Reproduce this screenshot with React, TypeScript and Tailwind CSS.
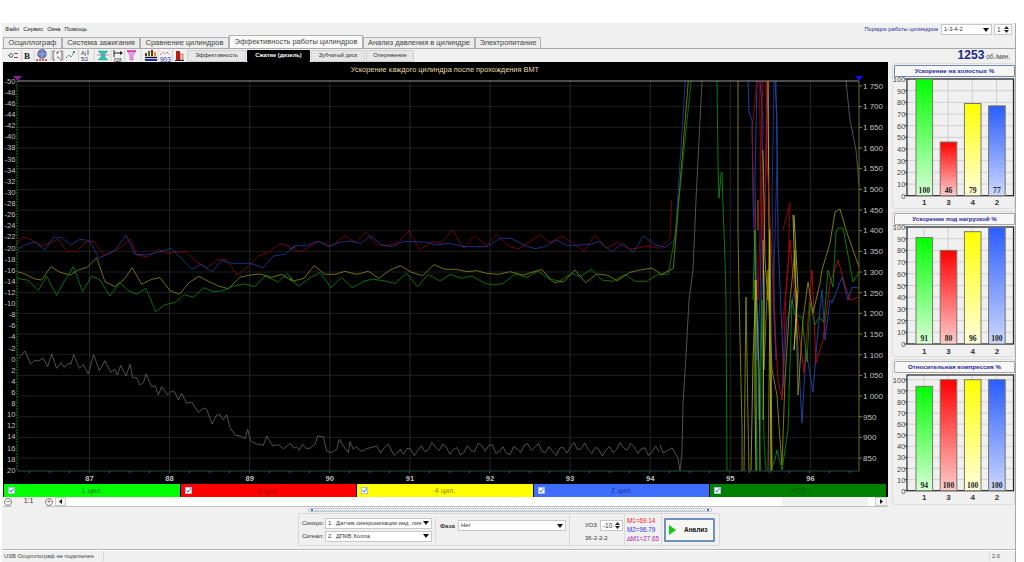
import React from "react";

// converts points read from a zoomed crop (3x) back to page coordinates
function z(ox: number, oy: number, s: string) {
  return s
    .split(" ")
    .map((p) => {
      const [x, y] = p.split(",").map(Number);
      return `${ox + x / 3},${oy + y / 3}`;
    })
    .join(" ");
}

const calm = [
  {
    c: "#8a0514",
    a: "50,75 68,50 95,60 125,78 150,68 175,57 200,94 230,94 258,66 282,64 310,104 340,95 365,82 390,55 410,105 445,111 475,88 505,101 530,96 560,96 590,125 620,145 650,120 680,118 710,165 745,140 775,107 805,98 840,70 870,80",
    b: "0,85 32,95 85,65 125,78 165,47 197,68 228,37 262,75 295,77 325,67 357,33 390,90 425,65 455,68 488,30 522,85 553,47 590,78 620,42 655,78 685,87 750,45 780,68 815,48 850,70 882,93 915,45 950,85 982,67 1020,88 1075,78 1110,85 1140,55 1145,-60",
  },
  {
    c: "#1f3f9c",
    a: "50,88 80,72 105,66 135,90 160,52 185,52 212,75 240,58 270,62 295,113 325,103 350,85 378,45 405,103 440,105 470,98 515,85 575,148 605,132 635,156 665,122 695,130 750,130 790,143 820,108 855,103 885,77",
    b: "0,88 20,77 50,77 85,63 115,80 150,67 180,63 212,71 242,47 275,75 307,80 340,64 412,67 440,75 475,70 525,80 590,80 632,55 665,55 700,75 735,86 765,80 800,60 832,77 900,73 928,65 965,95 1000,70 1030,97 1060,47 1095,75 1125,82 1155,60 1190,-480",
  },
  {
    c: "#8c8c12",
    a: "50,155 70,160 105,177 125,180 153,140 180,157 210,165 235,150 262,142 290,113 315,185 345,200 372,178 397,143 425,193 455,178 480,173 510,212 538,223 568,187 597,169 625,184 655,198 685,206 720,172 750,165 780,162 815,172 845,163 875,182",
    b: "0,178 10,183 42,175 72,137 105,163 135,163 165,154 200,163 235,154 267,175 300,150 332,137 365,157 398,167 432,134 465,148 500,148 530,155 560,152 590,160 625,163 660,155 700,165 755,148 790,187 822,185 855,150 887,188 920,162 950,165 982,182 1020,157 1050,150 1085,144 1115,163 1150,145 1200,-480",
  },
  {
    c: "#0b8c0b",
    a: "50,175 85,181 115,211 140,168 170,226 195,180 220,140 248,215 275,168 300,180 330,228 360,188 385,212 410,223 438,205 467,275 495,254 525,247 553,224 580,232 610,203 640,215 670,212 700,198 735,192 765,200 795,168 835,186 862,160 885,190",
    b: "0,172 25,199 60,173 90,158 123,203 155,172 187,203 225,182 250,178 280,182 315,190 350,160 382,200 415,163 450,183 482,163 515,175 545,168 585,190 610,195 640,190 675,162 710,172 745,153 780,178 810,183 845,160 870,170 905,148 935,180 970,184 1005,163 1035,184 1070,184 1100,165 1135,162 1155,50 1210,-480",
  },
];

const greyTrace =
  "55,55 75,33 92,72 105,60 115,63 130,55 143,80 155,42 170,85 183,68 192,82 207,70 213,72 221,44 238,85 250,74 265,102 281,44 298,92 315,62 332,97 345,88 352,105 362,76 378,108 390,73 398,113 410,113 420,135 430,128 438,102 455,140 465,137 475,165 485,140 503,165 515,153 525,157 535,180 545,160 560,190 575,186 595,217 612,204 620,208 636,252 650,225 660,224 670,240 680,224 690,262 705,285 720,288 735,296 743,268 752,303 770,312 790,316 800,288 818,318 835,314 850,326 872,310 882,325 890,320 898,331 907,312 918,325 930,325 945,313 953,288 970,290 980,333 995,338 1010,328 1018,298 1035,325 1045,338 1050,305 1060,328 1068,320 1085,335 1100,326 1130,318 1142,340 1150,326 1165,313 1182,346 1200,332";

// the noisy flat stretch of the grey trace
const greyTail = Array.from({ length: 74 }, (_, i) => {
  const x = 400 + i * 3.55;
  const y = 449 + 4.5 * Math.sin(i * 1.9) + 2.5 * Math.sin(i * 0.47);
  return `${x.toFixed(1)},${y.toFixed(1)}`;
}).join(" ");

const chaos: { c: string; p: string }[] = [
  { c: "#666666", p: "660,445 663,453 672,448 678,458 680,471 682,452 683,403 686,355 689,300 693,270 696,200 699,140 702,81" },
  { c: "#666666", p: "846,81 850,120 856,150 859,185" },
  { c: "#0a9a0a", p: "717,81 718,165 719,198 721,174 722,172 723,205 725,260 726,300 727,471" },
  { c: "#9a9a10", p: "738,81 738,230 739,295 742,427 742,471" },
  { c: "#9a9a10", p: "744,471 746,297 748,420 749,471" },
  { c: "#2450c0", p: "748,81 749,112 752,120 753,200 756,290 757,360 760,300 762,190 763,120 760,81" },
  { c: "#2450c0", p: "757,81 755,180 756,260 759,420 761,320 765,200 768,81" },
  { c: "#1f3f9c", p: "776,81 777,160 775,240 773,300 776,360 772,200 774,81" },
  { c: "#b00012", p: "757,81 752,130 754,200 758,300 760,230 762,81" },
  { c: "#b00012", p: "763,81 760,160 764,250 767,81" },
  { c: "#900012", p: "759,81 761,180 763,280 766,180 769,81" },
  { c: "#b8b810", p: "763,150 765,260 768,300 770,230 771,340 772,471" },
  { c: "#20b020", p: "753,300 755,230 757,470" },
  { c: "#a8e020", p: "755,280 755,400 756,471" },
  { c: "#b8b810", p: "751,471 753,360 756,280 759,370 760,471" },
  { c: "#8c8c12", p: "764,270 764,370 768,270 770,300 768,471" },
  { c: "#0a9a0a", p: "760,471 760,440 762,300 764,440 766,471" },
  { c: "#d8d820", p: "768,81 769,220 771,470" },
  { c: "#2450c0", p: "775,81 777,120 778,240 781,310 784,380 782,395 787,320 795,290 802,423 806,350 813,392 818,330 822,290 825,340 830,300 832,303 842,277 848,300 852,287 859,288" },
  { c: "#cc0a12", p: "766,81 767,160 772,260 775,330 778,380 782,400 786,290 790,240 795,300 804,373 808,320 812,270 816,363 823,340 830,283 838,260 845,285 850,300 859,297" },
  { c: "#b00012", p: "783,230 790,203 788,270 782,330" },
  { c: "#9a9a10", p: "768,290 772,370 777,395 780,440 782,465 785,380 790,300 795,250 798,395 803,320 808,282 813,313 820,283 822,270 830,243 835,212 840,209 847,233 859,267" },
  { c: "#0a9a0a", p: "770,471 775,460 777,450 782,470 788,430 792,300 795,315 802,317 807,362 810,303 815,325 819,317 824,322 828,270 833,287 836,232 838,228 843,228 853,282 859,272" },
  { c: "#c8c820", p: "793,215 795,280 797,300 794,350 798,290 794,215" },
  { c: "#d8c040", p: "763,240 764,300 763,420" },
  { c: "#e08a10", p: "758,200 758,230" },
];

const leftLabels = Array.from({ length: 36 }, (_, i) => -50 + i * 2);
const rightLabels = Array.from({ length: 19 }, (_, i) => 1750 - i * 50);
const xLabels = [87, 88, 89, 90, 91, 92, 93, 94, 95, 96];

function ScopeChart() {
  return (
    <svg viewBox="3 62 885 422" className="block h-[422px] w-[885px] bg-black">
      <defs>
        <clipPath id="plot">
          <rect x="17" y="81" width="842" height="390" />
        </clipPath>
      </defs>
      <text x="445" y="72" textAnchor="middle" fontSize="7.4" fill="#e8d8a8" fontFamily="Liberation Sans">
        Ускорение каждого цилиндра после прохождения ВМТ
      </text>
      {rightLabels.map((_, i) => (
        <line key={i} x1="17" x2="859" y1={86 + i * 20.67} y2={86 + i * 20.67} stroke="#1e1e1e" />
      ))}
      {xLabels.map((v, i) => (
        <line key={v} x1={89.5 + i * 80.1} x2={89.5 + i * 80.1} y1="81" y2="471" stroke="#262626" />
      ))}
      <g clipPath="url(#plot)" fill="none" strokeWidth="0.8">
        <polyline points={z(0, 340, greyTrace) + " " + greyTail} stroke="#666666" />
        {chaos.map((l, i) => (
          <polyline key={i} points={l.p} stroke={l.c} />
        ))}
        {calm.map((l) => (
          <polyline key={l.c} points={z(0, 220, l.a) + " " + z(290, 220, l.b)} stroke={l.c} />
        ))}
      </g>
      <line x1="17" x2="859" y1="81" y2="81" stroke="#9a9a9a" />
      <line x1="17" x2="859" y1="471" y2="471" stroke="#244a4a" />
      {Array.from({ length: 42 }, (_, i) => (
        <line key={i} x1={29.5 + i * 20} x2={29.5 + i * 20} y1="471" y2="473" stroke="#3d5a5a" />
      ))}
      <line x1="17" x2="17" y1="81" y2="471" stroke="#1d8a1d" strokeDasharray="2 1" />
      <line x1="859" x2="859" y1="81" y2="471" stroke="#6e6a1c" />
      {leftLabels.map((v, i) => (
        <text key={v} x="15.5" y={83.8 + i * 11.115} textAnchor="end" fontSize="7.6" fill="#c0c0c0" fontFamily="Liberation Sans">
          {v}
        </text>
      ))}
      {rightLabels.map((v, i) => (
        <g key={v}>
          <line x1="859" x2="862" y1={86 + i * 20.67} y2={86 + i * 20.67} stroke="#8a8620" />
          <text x="863" y={88.8 + i * 20.67} fontSize="8" fill="#c0c0c0" fontFamily="Liberation Sans">
            {v >= 1000 ? `1 ${String(v).slice(1)}` : v}
          </text>
        </g>
      ))}
      {xLabels.map((v, i) => (
        <text key={v} x={89.5 + i * 80.1} y="481" textAnchor="middle" fontSize="7.6" fontWeight="700" fill="#c0c0c0" fontFamily="Liberation Sans">
          {v}
        </text>
      ))}
      <polygon points="13,76 22,76 17.5,81" fill="#8a1a9a" />
      <polygon points="855,76 863,76 859,81" fill="#1010f0" />
    </svg>
  );
}

const bars = [
  { id: "g1", label: "1", from: "#00ff00", to: "#d8ffd8" },
  { id: "r1", label: "3", from: "#ff0000", to: "#ffcccc" },
  { id: "y1", label: "4", from: "#ffff00", to: "#ffffdc" },
  { id: "b1", label: "2", from: "#2a5cff", to: "#ccd8ff" },
];

function BarPanel({
  title,
  values,
  prefix,
  plotTop,
  zeroY,
  topY,
  outlined,
}: {
  title: string;
  values: number[];
  prefix: string;
  plotTop: number;
  zeroY: number;
  topY: number;
  outlined?: boolean;
}) {
  const scale = (zeroY - topY) / 100;
  return (
    <div className="flex h-[146px] w-[123px] flex-col rounded-[3px] border border-[#dcdcdc] px-px pt-px">
      <div
        className={`flex h-[12px] w-[121px] items-center justify-center rounded-[1px] border bg-[#f6f6f6] text-[6.2px] font-bold whitespace-nowrap text-[#27279c] ${
          outlined ? "border-[#6f8aa8]" : "border-[#a8a8a8]"
        }`}
      >
        {title}
      </div>
      <svg viewBox="0 0 121 131" className="block h-[131px] w-[121px] overflow-visible">
        <defs>
          {bars.map((b) => (
            <linearGradient key={b.id} id={prefix + b.id} x1="0" y1="0" x2="0" y2="1">
              <stop offset="0" stopColor={b.from} />
              <stop offset="1" stopColor={b.to} />
            </linearGradient>
          ))}
        </defs>
        {Array.from({ length: 11 }, (_, i) => (
          <g key={i}>
            <line x1="13" x2="119.5" y1={zeroY - i * 10 * scale} y2={zeroY - i * 10 * scale} stroke="#c8c8c8" strokeWidth="0.8" />
            <line x1="10.5" x2="13" y1={zeroY - i * 10 * scale} y2={zeroY - i * 10 * scale} stroke="#222" strokeWidth="0.8" />
            <text x="11.5" y={zeroY - i * 10 * scale + 3} textAnchor="end" fontSize="7.6" fill="#444" fontFamily="Liberation Sans">
              {i * 10}
            </text>
          </g>
        ))}
        {bars.map((b, i) => (
          <line key={b.id} x1={30 + i * 24.2} x2={30 + i * 24.2} y1={plotTop} y2={zeroY} stroke="#c8c8c8" strokeWidth="0.8" />
        ))}
        <rect x="13" y={plotTop} width="106.5" height={zeroY - plotTop} fill="none" stroke="#222" strokeWidth="1.2" />
        {bars.map((b, i) => {
          const h = values[i] * scale;
          return (
            <g key={b.id}>
              <rect
                x={22 + i * 24.2}
                y={zeroY - h}
                width="16.6"
                height={h}
                fill={`url(#${prefix + b.id})`}
                stroke="#777766"
                strokeWidth="1"
              />
              <text x={30.3 + i * 24.2} y={zeroY - 3} textAnchor="middle" fontSize="7.6" fontWeight="700" fill="#222" fontFamily="Liberation Serif">
                {values[i]}
              </text>
              <text x={30.3 + i * 24.2} y={zeroY + 9.5} textAnchor="middle" fontSize="8" fontWeight="700" fill="#333" fontFamily="Liberation Sans">
                {b.label}
              </text>
            </g>
          );
        })}
      </svg>
    </div>
  );
}

function Arrow({ dir = "down" }: { dir?: "down" | "up" }) {
  return (
    <svg width="6" height="4" viewBox="0 0 6 4" className="block shrink-0">
      <polygon points={dir === "down" ? "0,0 6,0 3,4" : "0,4 6,4 3,0"} fill="#111" />
    </svg>
  );
}

function Combo({ text, w }: { text: string; w: string }) {
  return (
    <div className={`flex h-[11px] items-center justify-between gap-[2px] border border-[#c8c8c8] bg-white px-[2px] text-[5.8px] whitespace-pre text-[#333] ${w}`}>
      <span>{text}</span>
      <Arrow />
    </div>
  );
}

function Spin({ text, w }: { text: string; w: string }) {
  return (
    <div className={`flex h-[11px] items-center justify-between border border-[#c8c8c8] bg-white px-[2px] text-[6.5px] text-[#333] ${w}`}>
      <span>{text}</span>
      <span className="flex flex-col gap-px">
        <svg width="5" height="3" viewBox="0 0 5 3" className="block"><polygon points="0,3 5,3 2.5,0" fill="#222" /></svg>
        <svg width="5" height="3" viewBox="0 0 5 3" className="block"><polygon points="0,0 5,0 2.5,3" fill="#222" /></svg>
      </span>
    </div>
  );
}

const tabs = [
  { t: "Осциллограф", w: "w-[59px]" },
  { t: "Система зажигания", w: "w-[78px]" },
  { t: "Сравнение цилиндров", w: "w-[89px]" },
  { t: "Эффективность работы цилиндров", w: "w-[134px]", active: true },
  { t: "Анализ давления в цилиндре", w: "w-[112px]" },
  { t: "Электропитание", w: "w-[66px]" },
];

const subTabs = [
  { t: "Эффективность", w: "w-[59px]" },
  { t: "Сжатие (дизель)", w: "w-[63px]", active: true },
  { t: "Зубчатый диск", w: "w-[54px]" },
  { t: "Опережение", w: "w-[48px]" },
];

function ToolIcons() {
  return (
    <div className="flex h-[13px] items-center">
      <svg width="182" height="13" viewBox="0 0 182 13" className="block">
        <circle cx="7" cy="6.5" r="1.8" fill="none" stroke="#336" strokeWidth="0.8" />
        <path d="M10 4.5h4M10 8.5h4" stroke="#c33" strokeWidth="1" />
        <path d="M4 6.5h1" stroke="#393" />
        <text x="20" y="10" fontSize="9" fontWeight="700" fill="#222" fontFamily="Liberation Serif">B</text>
        <circle cx="38" cy="5" r="4.4" fill="#6d78c8" stroke="#334" strokeWidth="0.5" />
        <path d="M33.5 5h9M38 .6v8.8" stroke="#cdd" strokeWidth="0.5" />
        <path d="M32 11h12" stroke="#c33" strokeWidth="1.6" strokeDasharray="2 1" />
        <path d="M51 2h-2v9h2M56 2h2v9h-2" fill="none" stroke="#444" strokeWidth="0.8" />
        <path d="M53 3v2M55 8v2" stroke="#c33" strokeWidth="1" />
        <path d="M53 8h1M53 3h2" stroke="#333" strokeWidth="0.8" />
        <path d="M62 9l3-3 2 2 3-5" fill="none" stroke="#1a8a2a" strokeWidth="1" strokeDasharray="2 1" />
        <circle cx="70" cy="3" r="1" fill="#272" />
        <text x="77" y="6" fontSize="5.5" fill="#333" fontFamily="Liberation Sans">Aj</text>
        <text x="77" y="12" fontSize="5" fill="#225" fontFamily="Liberation Sans">5/2</text>
        <path d="M84 1v5" stroke="#333" strokeWidth="0.8" />
        <path d="M94 2h10l-3 3v3l3 3H94l3-3V5z" fill="#27c4b8" stroke="#2a6" strokeWidth="0.5" />
        <path d="M93 6h12" stroke="#e060a0" strokeWidth="0.8" />
        <path d="M110 1v7M110 4h8" stroke="#223" strokeWidth="1" />
        <path d="M116 2l3 2-3 2" fill="#223" />
        <text x="110" y="12.5" fontSize="4.6" fill="#223" fontFamily="Liberation Sans">028</text>
        <path d="M123 2h9l-3 4v5h-3V6z" fill="#e8a0e8" stroke="#c040c0" strokeWidth="0.6" />
        <path d="M123 2h9" stroke="#d02080" strokeWidth="1.2" />
        <path d="M142 7V4M145 7V2M148 7V1M151 7V3" strokeWidth="2" stroke="#8a2222" />
        <path d="M145 7V3" strokeWidth="2" stroke="#2a8a2a" />
        <path d="M151 7V3" strokeWidth="2" stroke="#c8a010" />
        <path d="M141 8.5h12" stroke="#111" strokeWidth="1.4" />
        <path d="M141 11h12" stroke="#2030b0" strokeWidth="2" />
        <path d="M156 6l3-3 2 2 2-2 3 3" fill="none" stroke="#c04060" strokeWidth="0.9" strokeDasharray="1.2 0.8" />
        <text x="156" y="12.5" fontSize="6.5" fill="#2030a0" fontFamily="Liberation Sans">903</text>
        <rect x="172" y="2" width="4" height="9" fill="#c01818" />
        <rect x="176" y="5" width="3" height="6" fill="#e8d0a0" stroke="#802020" strokeWidth="0.5" />
        <path d="M171 11.5h9" stroke="#222" />
        <g stroke="#d0d0d0" strokeWidth="1">
          <path d="M17.5 1v11M30 1v11M47 1v11M59.5 1v11M74.5 1v11M90 1v11M107 1v11M120.5 1v11M137 1v11M154 1v11M168.5 1v11" />
        </g>
      </svg>
    </div>
  );
}

const legend = [
  { t: "1 цил.", bg: "bg-[#00ff00]", fg: "text-[#0a7a0a]" },
  { t: "3 цил.", bg: "bg-[#ff0000]", fg: "text-[#a00808]" },
  { t: "4 цил.", bg: "bg-[#ffff00]", fg: "text-[#8a8a00]" },
  { t: "2 цил.", bg: "bg-[#3d6cff]", fg: "text-[#1c3a9a]" },
  { t: "УОЗ", bg: "bg-[#008000]", fg: "text-[#0b5a0b]" },
];

export default function App() {
  return (
    <div className="flex h-[562px] w-[1024px] flex-col overflow-hidden bg-white pl-[2px] pr-[8px] pt-[23px] font-['Liberation_Sans',sans-serif]">
      <div className="flex flex-1 flex-col border-r border-[#a8a8a8] bg-[#f0f0f0]">
        <div className="flex h-[13px] items-center justify-between pl-[3px] pr-[3px]">
          <div className="flex gap-[4px] text-[5.8px] text-[#222]">
            <span>Файл</span>
            <span>Сервис</span>
            <span>Окна</span>
            <span>Помощь</span>
          </div>
          <div className="flex items-center gap-[2px]">
            <span className="mr-px text-[5.7px] text-[#27279c]">Порядок работы цилиндров</span>
            <Combo text="1-3-4-2" w="w-[51px]" />
            <Spin text="1" w="w-[18px]" />
          </div>
        </div>

        <div className="flex h-[13px] items-end border-b border-[#a8a8a8] pl-px">
          {tabs.map((tab) => (
            <div
              key={tab.t}
              className={`flex items-center justify-center border border-b-0 border-[#b0b0b0] text-[7.45px] whitespace-nowrap text-[#444] ${tab.w} ${
                tab.active ? "h-[13px] bg-[#fafafa]" : "h-[11px] bg-[#ececec]"
              }`}
            >
              {tab.t}
            </div>
          ))}
        </div>

        <div className="flex h-[13px] items-center pl-[2px] pr-[5px]">
          <ToolIcons />
          <div className="ml-[1px] flex h-[12px] gap-px">
            {subTabs.map((tab) => (
              <div
                key={tab.t}
                className={`flex items-center justify-center rounded-[1px] text-[5.7px] whitespace-nowrap ${tab.w} ${
                  tab.active ? "bg-black font-bold text-white" : "border border-[#d0d0d0] bg-[#e6e6e6] text-[#333]"
                }`}
              >
                {tab.t}
              </div>
            ))}
          </div>
          <div className="ml-auto flex items-baseline gap-[2px]">
            <span className="text-[12px] leading-[13px] font-bold text-[#1a2a8a]">1253</span>
            <span className="text-[6.3px] text-[#444]">об./мин.</span>
          </div>
        </div>

        <div className="flex h-[445px]">
          <div className="flex w-[888px] flex-col pl-px">
            <ScopeChart />
            <div className="flex h-[13px] w-[885px] bg-black pl-px pr-[2px]">
              <div className="flex flex-1 gap-px">
                {legend.map((item) => (
                  <div key={item.t} className={`relative flex flex-1 items-center justify-center text-[7.5px] ${item.bg} ${item.fg}`}>
                    <span className="absolute left-[4px] top-[3px] flex h-[7px] w-[7px] items-center justify-center border border-[#a8c0e0] bg-white">
                      <svg width="5" height="5" viewBox="0 0 5 5" className="block">
                        <path d="M.5 2.5l1.5 1.5 2.5-3.5" fill="none" stroke="#2a60d0" strokeWidth="1" />
                      </svg>
                    </span>
                    {item.t}
                  </div>
                ))}
              </div>
            </div>
            <div className="flex h-[10px] w-[885px] items-center border-b border-[#c0c0c0] bg-white">
              <span className="ml-[1px] flex h-[8px] w-[8px] items-center justify-center rounded-full border border-[#777] text-[7px] leading-none text-[#333]">−</span>
              <span className="w-[33px] bg-[#f0f0f0] text-center text-[7px] text-[#333]">1:1</span>
              <span className="flex h-[8px] w-[8px] items-center justify-center rounded-full border border-[#777] text-[7px] leading-none text-[#a02020]">+</span>
              <span className="ml-[2px] flex h-[9px] w-[11px] items-center justify-center border border-[#ccc] bg-[#f4f4f4]">
                <svg width="3" height="5" viewBox="0 0 3 5" className="block"><polygon points="3,0 3,5 0,2.5" fill="#111" /></svg>
              </span>
              <span className="ml-[716px] h-[9px] w-[86px] bg-[#f0f0f0]" />
              <span className="ml-[7px] flex h-[9px] w-[12px] items-center justify-center border border-[#ccc] bg-[#f4f4f4]">
                <svg width="3" height="5" viewBox="0 0 3 5" className="block"><polygon points="0,0 0,5 3,2.5" fill="#111" /></svg>
              </span>
            </div>
          </div>
          <div className="flex w-[125px] flex-col gap-[2px] pl-[2px] pt-px">
            <BarPanel title="Ускорение на холостых %" values={[100, 46, 79, 77]} prefix="a" plotTop={2} zeroY={118.7} topY={2} outlined />
            <BarPanel title="Ускорение под нагрузкой %" values={[91, 80, 96, 100]} prefix="b" plotTop={2} zeroY={119} topY={2} />
            <BarPanel title="Относительная компрессия %" values={[94, 100, 100, 100]} prefix="c" plotTop={2} zeroY={117.7} topY={6.7} />
          </div>
        </div>

        <div className="flex h-[43px] flex-col border-b border-[#b8b8b8] pl-[296px]">
          <div className="ml-[10px] mt-px flex h-[4px] w-[404px] items-center justify-between rounded-[1px] border border-[#c8c8c8] bg-[#eef2f8] px-[2px]">
            <span className="h-[2px] w-[2px] bg-[#3a70d0]" />
            <span className="mx-[2px] h-px flex-1 border-t border-dotted border-[#9cc0e8]" />
            <span className="h-[2px] w-[2px] bg-[#3a70d0]" />
          </div>
          <div className="mt-px flex h-[33px] w-[422px] items-center rounded-[2px] border border-[#d8d8d8] text-[6px] text-[#333]">
            <div className="flex w-[137px] flex-col gap-[2px] border-r border-[#d8d8d8] pl-[3px]">
              <div className="flex items-center gap-[2px]">
                <span className="w-[21px] whitespace-nowrap">Синхро:</span>
                <Combo text="1.  Датчик синхронизации инд. лия" w="w-[107px]" />
              </div>
              <div className="flex items-center gap-[2px]">
                <span className="w-[21px] whitespace-nowrap">Сигнал:</span>
                <Combo text="2.  ДПКВ Холла" w="w-[107px]" />
              </div>
            </div>
            <div className="flex h-full w-[134px] items-start border-r border-[#d8d8d8] pl-[4px] pt-[6px]">
              <span className="w-[18px] pt-[2px] font-bold">Фаза</span>
              <Combo text="Нет" w="w-[108px]" />
            </div>
            <div className="flex h-full w-[55px] flex-col items-start border-r border-[#d8d8d8] pl-[15px] pt-[6px]">
              <div className="flex items-center gap-[3px]">
                <span>УОЗ</span>
                <Spin text="-10" w="w-[23px]" />
              </div>
              <span className="mt-[3px]">36-2-2-2</span>
            </div>
            <div className="flex h-full w-[37px] flex-col justify-center gap-[1px] border-r border-[#d8d8d8] pl-[2px] text-[6.3px] leading-[8px] whitespace-nowrap">
              <span className="text-[#f01a2a]">M1=69.14</span>
              <span className="text-[#3030e8]">M2=96.79</span>
              <span className="text-[#b020b0]">∆M1=27.65</span>
            </div>
            <div className="ml-[2px] flex h-[24px] w-[51px] items-center rounded-[1px] border-2 border-[#6f93b8] bg-[#f6f6f2] pl-[3px]">
              <svg width="7" height="10" viewBox="0 0 7 10" className="block shrink-0">
                <polygon points="0,0 7,5 0,10" fill="#14c814" />
              </svg>
              <span className="ml-[8px] text-[6.5px] font-bold text-[#111]">Анализ</span>
            </div>
          </div>
        </div>

        <div className="flex h-[11px] items-center border-t border-white text-[5.8px] text-[#444]">
          <div className="flex h-full w-[101px] items-center pl-[2px] whitespace-nowrap">USB Осциллограф не подключен</div>
          <div className="h-full flex-1 border-x border-[#d8d8d8]" />
          <div className="flex h-full w-[25px] items-center pl-[2px]">2.0</div>
        </div>
      </div>
    </div>
  );
}
